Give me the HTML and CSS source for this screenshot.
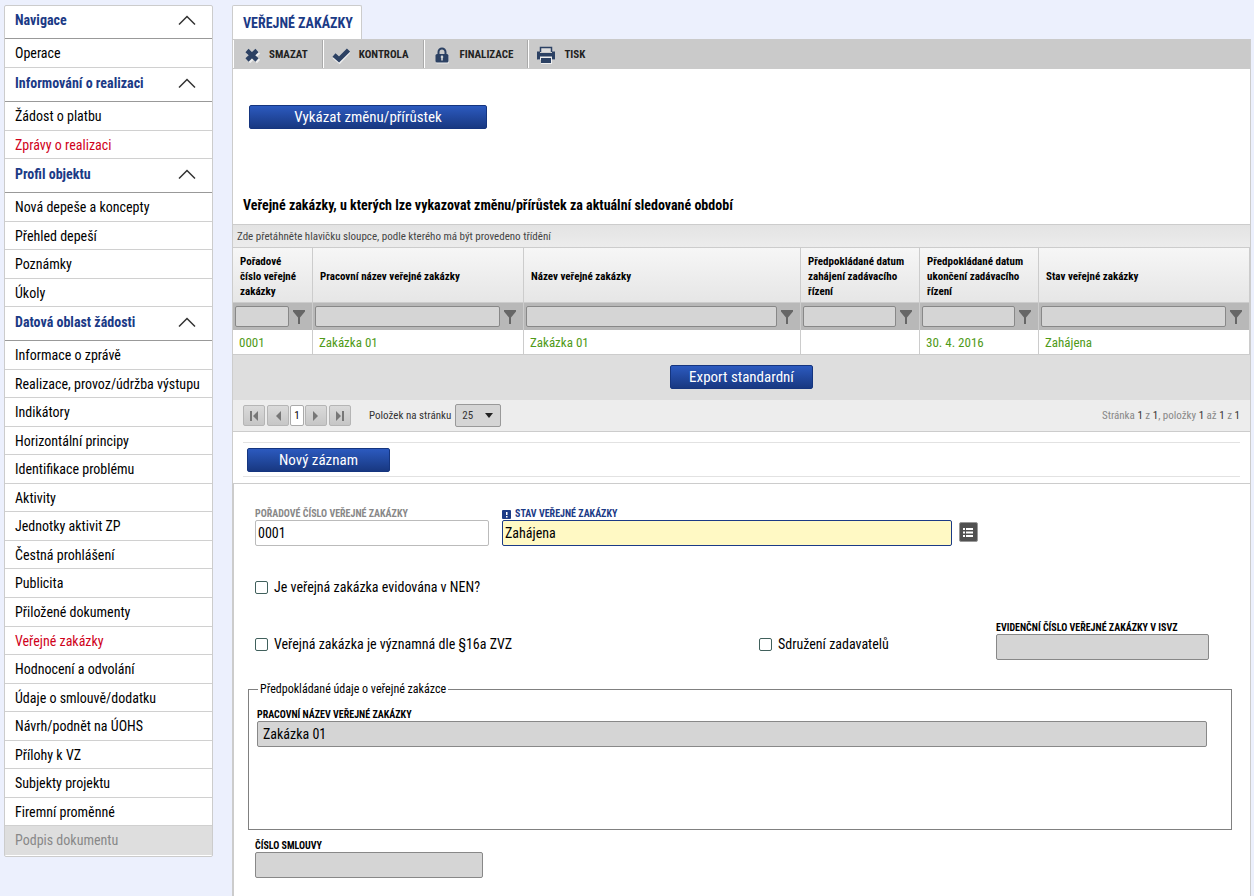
FILE: index.html
```html
<!DOCTYPE html>
<html lang="cs">
<head>
<meta charset="utf-8">
<title>Veřejné zakázky</title>
<link rel="stylesheet" href="styles.css">
</head>
<body>
<svg class="sprite" aria-hidden="true">
  <symbol id="chevron" viewBox="0 0 18 10"><path d="M1 9.500 9 1.500 17 9.500" fill="none" stroke="#333" stroke-width="1.500"/></symbol>
  <symbol id="funnel" viewBox="0 0 12 15"><path d="M0 0h12v1.500L7 7.500V14H5V7.500L0 1.500z" fill="#666"/></symbol>
</svg>
<div class="page">
  <nav class="sidebar" aria-label="Navigace">
    <h2 class="menu-head">Navigace <svg class="chevron"><use href="#chevron"/></svg></h2>
    <ul class="menu">
      <li><a href="#">Operace</a></li>
    </ul>
    <h2 class="menu-head">Informování o realizaci <svg class="chevron"><use href="#chevron"/></svg></h2>
    <ul class="menu">
      <li><a href="#">Žádost o platbu</a></li>
      <li><a href="#" class="active">Zprávy o realizaci</a></li>
    </ul>
    <h2 class="menu-head">Profil objektu <svg class="chevron"><use href="#chevron"/></svg></h2>
    <ul class="menu">
      <li><a href="#">Nová depeše a koncepty</a></li>
      <li><a href="#">Přehled depeší</a></li>
      <li><a href="#">Poznámky</a></li>
      <li><a href="#">Úkoly</a></li>
    </ul>
    <h2 class="menu-head">Datová oblast žádosti <svg class="chevron"><use href="#chevron"/></svg></h2>
    <ul class="menu menu-long">
      <li><a href="#">Informace o zprávě</a></li>
      <li><a href="#">Realizace, provoz/údržba výstupu</a></li>
      <li><a href="#">Indikátory</a></li>
      <li><a href="#">Horizontální principy</a></li>
      <li><a href="#">Identifikace problému</a></li>
      <li><a href="#">Aktivity</a></li>
      <li><a href="#">Jednotky aktivit ZP</a></li>
      <li><a href="#">Čestná prohlášení</a></li>
      <li><a href="#">Publicita</a></li>
      <li><a href="#">Přiložené dokumenty</a></li>
      <li><a href="#" class="active">Veřejné zakázky</a></li>
      <li><a href="#">Hodnocení a odvolání</a></li>
      <li><a href="#">Údaje o smlouvě/dodatku</a></li>
      <li><a href="#">Návrh/podnět na ÚOHS</a></li>
      <li><a href="#">Přílohy k VZ</a></li>
      <li><a href="#">Subjekty projektu</a></li>
      <li><a href="#">Firemní proměnné</a></li>
      <li class="disabled"><a href="#">Podpis dokumentu</a></li>
    </ul>
  </nav>

  <main class="main">
    <h1 class="tab">VEŘEJNÉ ZAKÁZKY</h1>
    <div class="panel">
      <div class="toolbar">
        <button class="tool" type="button"><svg class="tool-icon" viewBox="0 0 18 18"><path d="M5.500 5 15.500 14.500M15.500 5 5.500 14.500" transform="translate(1 1)" stroke="#eee" stroke-width="4.500"/><path d="M5 4.500 15 14M15 4.500 5 14" stroke="#2c4163" stroke-width="4.500"/></svg>SMAZAT</button>
        <button class="tool" type="button"><svg class="tool-icon" viewBox="0 0 18 18"><path d="M2 11 7.500 15.500 17 5.500" fill="none" stroke="#eee" stroke-width="4"/><path d="M2 9 7 13.500 16.500 4" fill="none" stroke="#2c4163" stroke-width="4.500"/></svg>KONTROLA</button>
        <button class="tool" type="button"><svg class="tool-icon" viewBox="0 0 18 18"><rect x="3" y="8.500" width="13" height="9" rx="1" fill="#eee"/><path d="M5.500 9V6a3.500 3.500 0 0 1 7 0v3" fill="none" stroke="#2c4163" stroke-width="2"/><rect x="2.500" y="8" width="13" height="8.500" rx="1.500" fill="#2c4163"/><path d="M9 9.500v5M7.800 11h2.400" stroke="#ddd" stroke-width="1.500"/></svg>FINALIZACE</button>
        <button class="tool" type="button"><svg class="tool-icon" viewBox="0 0 18 18"><path d="M1 7h17v7h-3v4H4v-4H1z" fill="#eee"/><path d="M3.500 6V1.500h11V6" fill="#ddd" stroke="#2c4163" stroke-width="1.500"/><path d="M0 5.500h3V7h12V5.500h3v8h-3v-3H3v3H0z" fill="#2c4163"/><path d="M4 12h10v5H4z" fill="#2c4163"/></svg>TISK</button>
      </div>

      <div class="actions"><button class="btn btn-wide" type="button">Vykázat změnu/přírůstek</button></div>

      <h3 class="caption">Veřejné zakázky, u kterých lze vykazovat změnu/přírůstek za aktuální sledované období</h3>
      <div class="group-bar">Zde přetáhněte hlavičku sloupce, podle kterého má být provedeno třídění</div>
      <table class="grid">
        <colgroup><col class="c-number"><col class="c-name"><col class="c-title"><col class="c-date"><col class="c-date"><col class="c-name"></colgroup>
        <thead>
          <tr>
            <th scope="col">Pořadové číslo veřejné zakázky</th>
            <th scope="col">Pracovní název veřejné zakázky</th>
            <th scope="col">Název veřejné zakázky</th>
            <th scope="col">Předpokládané datum zahájení zadávacího řízení</th>
            <th scope="col">Předpokládané datum ukončení zadávacího řízení</th>
            <th scope="col">Stav veřejné zakázky</th>
          </tr>
          <tr class="filters">
            <td><div class="filter"><input type="text" aria-label="Filtr: pořadové číslo"><button type="button" aria-label="Filtrovat"><svg><use href="#funnel"/></svg></button></div></td>
            <td><div class="filter"><input type="text" aria-label="Filtr: pracovní název"><button type="button" aria-label="Filtrovat"><svg><use href="#funnel"/></svg></button></div></td>
            <td><div class="filter"><input type="text" aria-label="Filtr: název"><button type="button" aria-label="Filtrovat"><svg><use href="#funnel"/></svg></button></div></td>
            <td><div class="filter"><input type="text" aria-label="Filtr: datum zahájení"><button type="button" aria-label="Filtrovat"><svg><use href="#funnel"/></svg></button></div></td>
            <td><div class="filter"><input type="text" aria-label="Filtr: datum ukončení"><button type="button" aria-label="Filtrovat"><svg><use href="#funnel"/></svg></button></div></td>
            <td><div class="filter"><input type="text" aria-label="Filtr: stav"><button type="button" aria-label="Filtrovat"><svg><use href="#funnel"/></svg></button></div></td>
          </tr>
        </thead>
        <tbody>
          <tr class="record"><td>0001</td><td>Zakázka 01</td><td>Zakázka 01</td><td></td><td>30. 4. 2016</td><td>Zahájena</td></tr>
        </tbody>
      </table>
      <div class="export"><button class="btn" type="button">Export standardní</button></div>
      <div class="pager">
        <div class="pager-nav">
          <button type="button" aria-label="První"><svg viewBox="0 0 10 10"><path d="M1 0h2v10H1zM9 0v10L4 5z"/></svg></button>
          <button type="button" aria-label="Předchozí"><svg viewBox="0 0 10 10"><path d="M8 0v10L3 5z"/></svg></button>
          <span class="page-no">1</span>
          <button type="button" aria-label="Další"><svg viewBox="0 0 10 10"><path d="M2 0v10l5-5z"/></svg></button>
          <button type="button" aria-label="Poslední"><svg viewBox="0 0 10 10"><path d="M1 0v10l5-5zM7 0h2v10H7z"/></svg></button>
        </div>
        <label for="page-size">Položek na stránku</label>
        <div class="select"><select id="page-size"><option>25</option></select><svg viewBox="0 0 8 5"><path d="M0 0h8L4 5z"/></svg></div>
        <span class="pager-info">Stránka <b>1</b> z <b>1</b>, položky <b>1</b> až <b>1</b> z <b>1</b></span>
      </div>
      <div class="new-record"><button class="btn" type="button">Nový záznam</button></div>

      <form class="form">
        <div class="row row-top">
          <div class="field field-number"><label class="muted" for="number">POŘADOVÉ ČÍSLO VEŘEJNÉ ZAKÁZKY</label><input id="number" type="text" value="0001"></div>
          <div class="field field-state"><label class="required" for="state"><svg viewBox="0 0 9 9"><rect width="9" height="9" rx="1" fill="#1b3a86"/><path d="M4 2h1.500v3H4zM4 6h1.500v1.500H4z" fill="#fff"/></svg>STAV VEŘEJNÉ ZAKÁZKY</label><input class="is-required" id="state" type="text" value="Zahájena"></div>
          <button class="list-btn" type="button" aria-label="Vybrat ze seznamu"><svg viewBox="0 0 19 20"><rect x=".5" y=".5" width="18" height="19" rx="1.500" fill="#515151" stroke="#999"/><path d="M4 6h2v2H4zM7 6h7v2H7zM4 9.500h2v2H4zM7 9.500h7v2H7zM4 13h2v2H4zM7 13h7v2H7z" fill="#fff"/></svg></button>
        </div>
        <label class="check check-nen"><input type="checkbox">Je veřejná zakázka evidována v NEN?</label>
        <div class="row row-checks">
          <label class="check check-main"><input type="checkbox">Veřejná zakázka je významná dle §16a ZVZ</label>
          <label class="check check-group"><input type="checkbox">Sdružení zadavatelů</label>
          <div class="field field-isvz"><label for="isvz">EVIDENČNÍ ČÍSLO VEŘEJNÉ ZAKÁZKY V ISVZ</label><input class="is-locked" id="isvz" type="text" readonly></div>
        </div>
        <fieldset class="estimate">
          <legend>Předpokládané údaje o veřejné zakázce</legend>
          <div class="field"><label for="work-name">PRACOVNÍ NÁZEV VEŘEJNÉ ZAKÁZKY</label><input class="is-locked" id="work-name" type="text" value="Zakázka 01" readonly></div>
        </fieldset>
        <div class="field field-contract"><label for="contract">ČÍSLO SMLOUVY</label><input class="is-locked" id="contract" type="text" readonly></div>
      </form>
    </div>
  </main>
</div>
</body>
</html>
```
FILE: styles.css
```css
* { box-sizing: border-box; }
body { margin: 0; background: #ecf0fd; color: #000; font: 14px/18px "Roboto Condensed", "Liberation Sans Narrow", Roboto, sans-serif; }
button, input, select { font: inherit; color: inherit; margin: 0; }
h1, h2, h3, ul { margin: 0; padding: 0; }
.sprite { display: none; }
.page { display: flex; align-items: flex-start; gap: 19px; min-height: 100vh; padding: 5px 3px 0 4px; }

.sidebar { flex: none; width: 209px; background: #fff; border: 1px solid #ccc; border-radius: 2px; padding-bottom: 1px; }
.menu-head { display: flex; align-items: center; justify-content: space-between; height: 34px; padding: 0 16px 4px 10px; border-bottom: 1px solid #999; color: #1b3a86; font-size: 14px; line-height: 18px; font-weight: 700; }
.menu-head:first-child { height: 33px; }
.chevron { width: 18px; height: 10px; }
.menu { list-style: none; }
.menu li { height: 29px; border-bottom: 1px solid #d0d0d0; }
.menu li:nth-child(even) { height: 28px; }
.menu-long { display: grid; grid-auto-rows: 1fr; min-height: 514px; }
.menu-long li, .menu-long li:nth-child(even) { height: auto; }
.menu li.disabled { background: #dedede; border: 0; }
.menu a { display: block; padding: 5px 10px 4px; color: #000; text-decoration: none; white-space: nowrap; }
.menu a.active { color: #d0021b; }
.menu .disabled a { color: #888; }

.main { flex: 1; min-width: 0; display: flex; flex-direction: column; align-self: stretch; }
.tab { align-self: flex-start; height: 34px; padding: 8px 8px 8px 10px; background: #fff; border: 1px solid #ccc; border-bottom: 0; border-radius: 2px 2px 0 0; color: #1b3a86; font-size: 14px; line-height: 18px; font-weight: 700; }
.panel { flex: 1; display: flex; flex-direction: column; background: #fff; border: 1px solid #ccc; border-width: 0 1px; }
.toolbar { display: flex; height: 30px; padding: 1px 0; background: #cacaca; }
.tool { display: flex; align-items: center; gap: 9px; padding: 1px 14px 0 8px; background: none; border: 0; border-left: 1px solid #fff; border-right: 1px solid #aaa; color: #222; font-size: 11px; font-weight: 700; }
.tool:last-child { border-right: 0; }
.tool-icon { width: 18px; height: 18px; }

.btn { width: 143px; height: 24px; padding: 1px 0 0; border: 1px solid #15357f; border-radius: 2px; background: linear-gradient(#2c5abf, #183881); color: #fff; font-size: 15px; line-height: 21px; }
.btn-wide { width: 238px; }
.actions { padding: 36px 16px 0; height: 127px; }
.caption { padding: 0 10px; height: 28px; font-size: 14px; line-height: 18px; font-weight: 700; }
.group-bar { height: 24px; padding: 1px 4px 0; border-top: 1px solid #ccc; border-bottom: 1px solid #ccc; background: linear-gradient(#e3e3e3, #ececec); color: #444; font-size: 11px; line-height: 22px; }
.grid { width: 100%; table-layout: fixed; border-collapse: separate; border-spacing: 0; }
.c-number { width: 80px; }
.c-name { width: 211px; }
.c-title { width: 277px; }
.c-date { width: 119px; }
.grid th, .grid td { padding: 0 6px; border-right: 1px solid #ccc; text-align: left; }
.grid th { height: 55px; padding: 2px 10px 0 7px; background: linear-gradient(#f6f6f6, #e6e6e6); border-bottom: 1px solid #ccc; font-size: 11px; line-height: 15px; }
.grid .filters td { height: 27px; padding: 0 2px 1px; background: #b8b8b8; }
.filter { display: flex; gap: 3px; }
.filter input { flex: 1; min-width: 0; height: 21px; padding: 0 4px; background: #d5d5d5; border: 1px solid #888; border-radius: 2px; }
.filter button { display: flex; width: 18px; padding: 4px 0 0 1px; background: none; border: 0; }
.filter svg { width: 12px; height: 15px; }
.grid .record td { height: 25px; padding: 2px 6px 0; border-bottom: 1px solid #ccc; color: #4f9a18; font-size: 13px; }
.export { display: flex; justify-content: center; padding: 10px 0 11px; background: #dedede; }
.pager { display: flex; align-items: center; height: 32px; padding: 0 10px; background: #ededed; border-bottom: 1px solid #ccc; color: #333; font-size: 11px; }
.pager-nav { display: flex; gap: 2px; margin-right: 18px; }
.pager-nav button { width: 22px; height: 21px; padding: 0; display: flex; align-items: center; justify-content: center; background: linear-gradient(#dadada, #c6c6c6); border: 1px solid #b5b5b5; border-radius: 2px; }
.pager-nav svg { width: 10px; height: 10px; fill: #777; }
.page-no { width: 14px; height: 21px; margin: 0 -1px; background: #fff; border: 1px solid #aaa; border-radius: 2px; text-align: center; line-height: 20px; color: #000; }
.select { position: relative; margin-left: 4px; }
.select select { display: block; appearance: none; width: 46px; height: 23px; padding: 0 6px; background: #d5d5d5; border: 1px solid #999; border-radius: 2px; }
.select svg { position: absolute; right: 8px; top: 9px; width: 8px; height: 5px; fill: #222; }
.pager-info { margin-left: auto; color: #888; }
.pager-info b { color: #333; font-weight: 400; }
.new-record { margin: 10px 10px 6px; padding: 5px 4px 4px; border-top: 1px solid #e2e2e2; border-bottom: 1px solid #e2e2e2; display: flex; }

.form { flex: 1; margin-right: -1px; padding: 24px 18px 17px 14px; border: 1px solid #ccc; border-bottom: 0; }
.row { display: flex; }
.field { display: flex; flex-direction: column; }
.field label { display: flex; align-items: center; height: 12px; font-size: 10px; line-height: 12px; font-weight: 700; white-space: nowrap; }
.field input { width: 100%; height: 26px; padding: 0 2px; background: #fff; border: 1px solid #bbb; border-radius: 2px; }
.field .muted { color: #888; }
.field .required { gap: 4px; color: #1b3a86; }
.required svg { width: 9px; height: 9px; }
.field .is-required { background: #fff9c4; border-color: #1b3a86; }
.field .is-locked { padding: 0 5px; background: #d5d5d5; border-color: #888; }
.row-top { padding-left: 7px; }
.field-number { flex: 0 1 234px; margin-right: 13px; }
.field-state { flex: 0 1 450px; margin-right: 7px; }
.list-btn { align-self: flex-end; width: 19px; height: 20px; margin-bottom: 4px; padding: 0; background: none; border: 0; }
.list-btn svg { display: block; }
.check { display: flex; align-items: center; gap: 6px; height: 18px; }
.check input { appearance: none; width: 13px; height: 13px; border: 1px solid #40605c; border-radius: 2px; background: #fff; }
.check-nen { margin: 32px 0 26px 7px; }
.row-checks { padding: 0 23px 0 7px; align-items: flex-end; }
.row-checks .check { margin-bottom: 7px; }
.check-main { flex: 1; }
.check-group { width: 237px; }
.field-isvz { width: 213px; }
.estimate { height: 148px; margin: 22px 0 10px; padding: 13px 24px 0 8px; border: 1px solid #808080; }
.estimate legend { margin-left: 1px; padding: 0 2px; font-size: 12px; line-height: 14px; }
.field-contract { width: 228px; margin-left: 7px; }
```
